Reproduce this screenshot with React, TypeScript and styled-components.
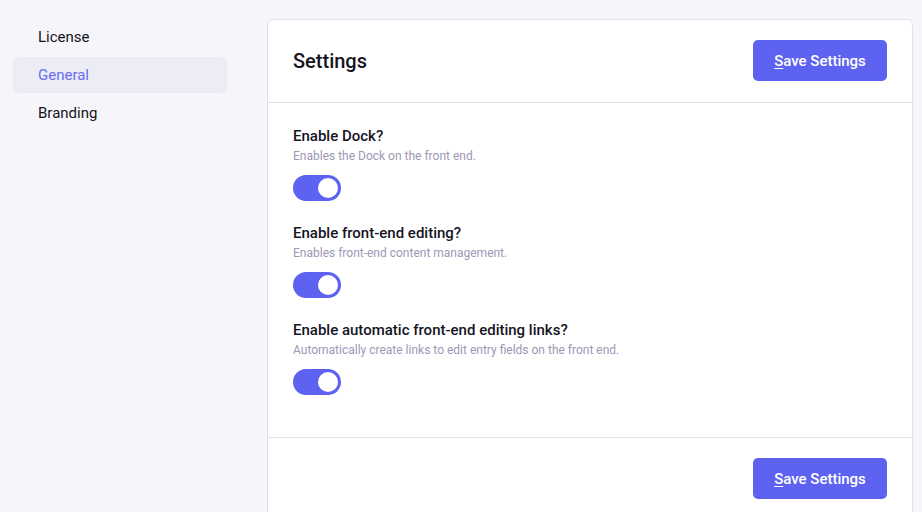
import React, { useState } from "react";
import styled, { createGlobalStyle } from "styled-components";

const GlobalStyle = createGlobalStyle`
  html, body { margin: 0; padding: 0; }
  body {
    background: #f6f6fa;
    font-family: Roboto, "Liberation Sans", Arial, sans-serif;
    color: #15141f;
    overflow: hidden;
  }
  * { box-sizing: border-box; }
`;

const Page = styled.div`
  display: flex;
  align-items: flex-start;
  padding: 19px 9px 0 13px;
  gap: 40px;
  height: 512px;
`;

const Sidebar = styled.nav`
  width: 214px;
  display: flex;
  flex-direction: column;
  gap: 2px;
  flex-shrink: 0;
`;

const NavItem = styled.div<{ $active?: boolean }>`
  height: 36px;
  display: flex;
  align-items: center;
  padding-left: 25px;
  border-radius: 6px;
  font-size: 15px;
  background: ${(p) => (p.$active ? "#ececf5" : "transparent")};
  color: ${(p) => (p.$active ? "#6a6cf2" : "#15141f")};
`;

const Card = styled.section`
  flex: 1;
  background: #ffffff;
  border: 1px solid #e1e0ef;
  border-radius: 6px;
  min-height: 600px;
`;

const Header = styled.div`
  display: flex;
  align-items: center;
  justify-content: space-between;
  padding: 20px 25px 21px;
  border-bottom: 1px solid #e1e0ef;
`;

const Title = styled.h1`
  margin: 0;
  font-size: 20px;
  font-weight: 500;
  color: #15141f;
`;

const Button = styled.button`
  height: 41px;
  width: 134px;
  border: none;
  border-radius: 5px;
  background: #5d63f0;
  color: #ffffff;
  font-family: Roboto, "Liberation Sans", Arial, sans-serif;
  font-size: 15px;
  font-weight: 500;
  cursor: pointer;
  u { text-decoration-thickness: 1px; text-underline-offset: 2px; }
`;

const Body = styled.div`
  display: flex;
  flex-direction: column;
  gap: 22px;
  padding: 23px 25px 42px;
  border-bottom: 1px solid #e1e0ef;
`;

const Field = styled.div`
  display: flex;
  flex-direction: column;
`;

const Label = styled.div`
  font-size: 15px;
  line-height: 20px;
  font-weight: 500;
  color: #15141f;
`;

const Desc = styled.div`
  margin-top: 2px;
  font-size: 12px;
  line-height: 16px;
  color: #9c98b6;
`;

const Toggle = styled.button<{ $on: boolean }>`
  margin-top: 11px;
  width: 48px;
  height: 26px;
  border-radius: 13px;
  border: none;
  padding: 3px;
  display: flex;
  justify-content: ${(p) => (p.$on ? "flex-end" : "flex-start")};
  background: ${(p) => (p.$on ? "#5d63f0" : "#d6d5e6")};
  cursor: pointer;
`;

const Knob = styled.span`
  width: 20px;
  height: 20px;
  border-radius: 50%;
  background: #ffffff;
`;

const Footer = styled.div`
  display: flex;
  justify-content: flex-end;
  padding: 20px 25px;
`;

const fields = [
  { label: "Enable Dock?", desc: "Enables the Dock on the front end." },
  { label: "Enable front-end editing?", desc: "Enables front-end content management." },
  {
    label: "Enable automatic front-end editing links?",
    desc: "Automatically create links to edit entry fields on the front end.",
  },
];

const SaveButton = () => (
  <Button>
    <u>S</u>ave Settings
  </Button>
);

export default function App() {
  const [values, setValues] = useState([true, true, true]);
  return (
    <>
      <GlobalStyle />
      <Page>
        <Sidebar>
          <NavItem>License</NavItem>
          <NavItem $active>General</NavItem>
          <NavItem>Branding</NavItem>
        </Sidebar>
        <Card>
          <Header>
            <Title>Settings</Title>
            <SaveButton />
          </Header>
          <Body>
            {fields.map((f, i) => (
              <Field key={f.label}>
                <Label>{f.label}</Label>
                <Desc>{f.desc}</Desc>
                <Toggle
                  $on={values[i]}
                  onClick={() => setValues(values.map((v, j) => (j === i ? !v : v)))}
                >
                  <Knob />
                </Toggle>
              </Field>
            ))}
          </Body>
          <Footer>
            <SaveButton />
          </Footer>
        </Card>
      </Page>
    </>
  );
}
